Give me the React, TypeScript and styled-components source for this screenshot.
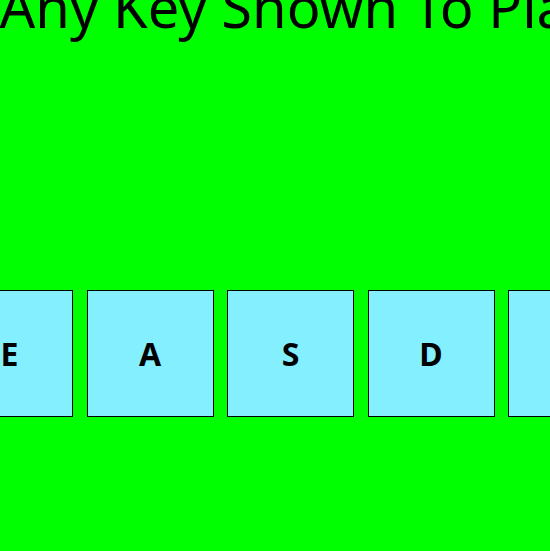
import React from "react";
import styled, { createGlobalStyle } from "styled-components";

const Global = createGlobalStyle`
  html, body {
    margin: 0;
    padding: 0;
    background: #00ff00;
    overflow: hidden;
  }
  body {
    font-family: "Noto Sans", "Open Sans", sans-serif;
  }
`;

const Page = styled.div`
  width: 550px;
  height: 551px;
  overflow: hidden;
  background: #00ff00;
`;

const Stage = styled.div`
  width: 1110.5px;
  margin-left: -335px;
  display: flex;
  flex-direction: column;
  align-items: center;
`;

const Title = styled.h1`
  margin: -32px 0 0;
  font-size: 56px;
  line-height: 76px;
  font-weight: 400;
  color: #000;
  white-space: nowrap;
  text-align: center;
`;

const KeyRow = styled.div`
  margin-top: 246px;
  display: flex;
  gap: 13.5px;
`;

const Key = styled.div`
  box-sizing: border-box;
  width: 127px;
  height: 127px;
  border: 1px solid #000;
  background: #84efff;
  display: flex;
  align-items: center;
  justify-content: center;
  font-size: 32px;
  font-weight: 700;
  color: #000;
`;

const keys = ["Q", "W", "E", "A", "S", "D", "F", "G"];

export default function App() {
  return (
    <Page>
      <Global />
      <Stage>
        <Title>Press Any Key Shown To Play</Title>
        <KeyRow>
          {keys.map((k) => (
            <Key key={k}>{k}</Key>
          ))}
        </KeyRow>
      </Stage>
    </Page>
  );
}
